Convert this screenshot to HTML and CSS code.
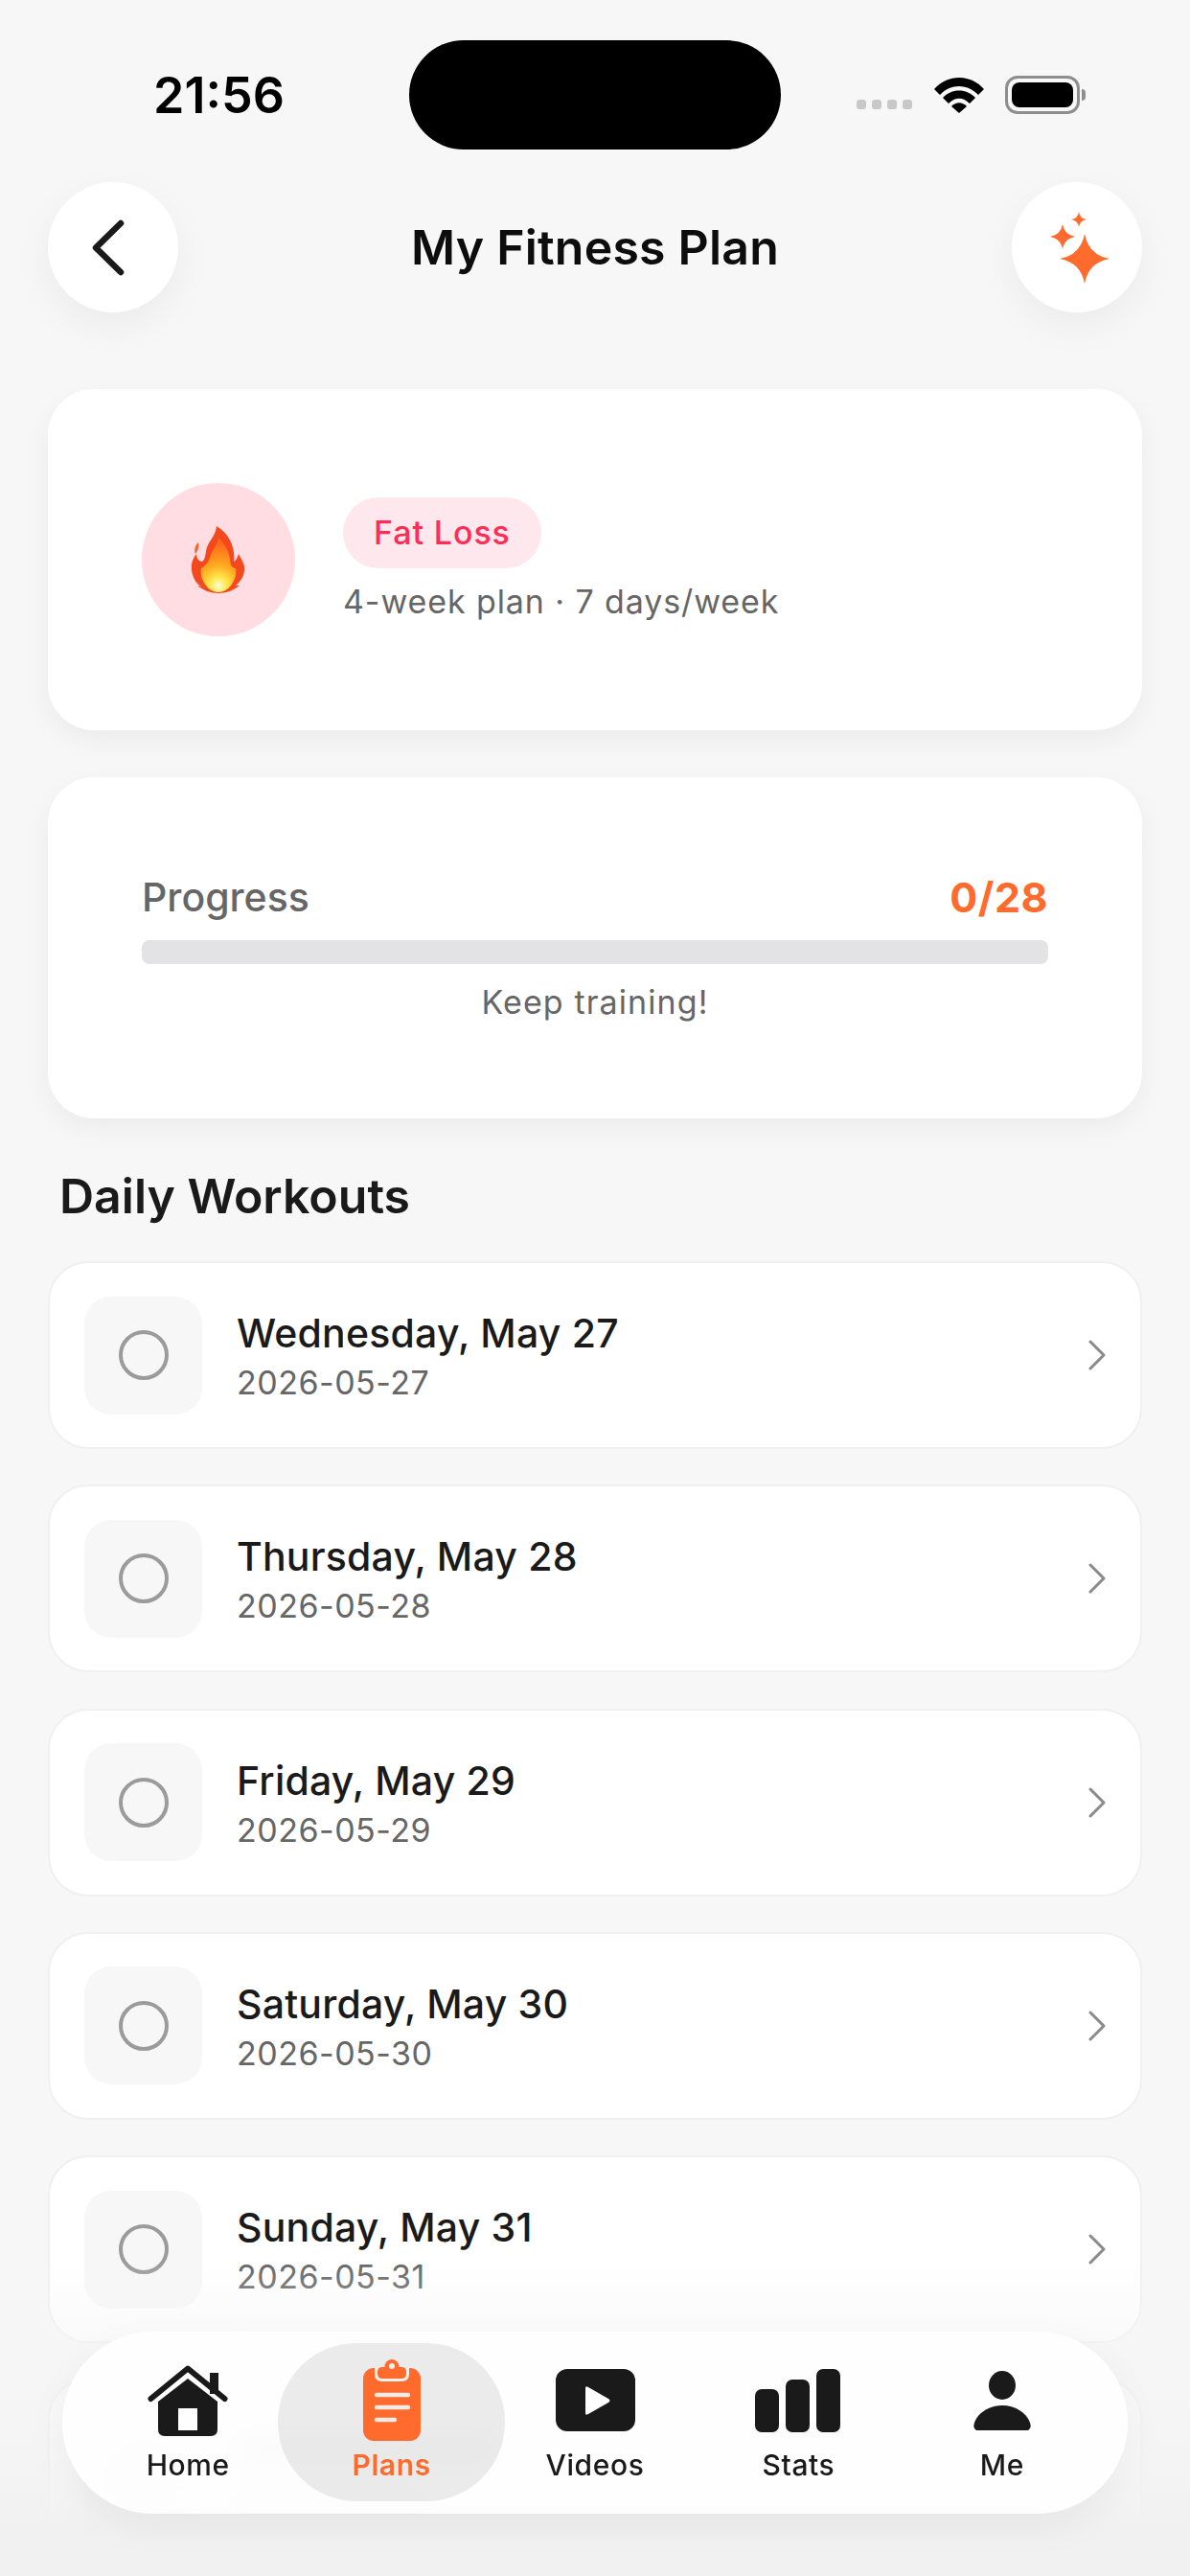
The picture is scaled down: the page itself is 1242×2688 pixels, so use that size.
FILE: index.html
```html
<!DOCTYPE html>
<html lang="en">
<head>
    <meta charset="UTF-8">
    <meta name="viewport" content="width=device-width, initial-scale=1.0">
    <title>My Fitness Plan</title>
    <link rel="stylesheet" href="styles.css">
</head>
<body>
    <div class="page">
        <div class="status">
            <span class="time">21:56</span>
            <div class="island"></div>
            <div class="status-icons">
                <div class="signal"><i></i><i></i><i></i><i></i></div>
                <svg class="wifi" width="54" height="38" viewBox="0 0 54 38">
                    <path d="M1 13 C15 -3 39 -3 53 13 L47 19 C36 7 18 7 7 19Z" fill="#000"/>
                    <path d="M10 22 C19 12 35 12 44 22 L38 28 C31 21 23 21 16 28Z" fill="#000"/>
                    <path d="M19 31 C24 26 30 26 35 31 L27 38Z" fill="#000"/>
                </svg>
                <div class="battery"><div class="battery-fill"></div></div>
                <div class="battery-cap"></div>
            </div>
        </div>

        <header class="topbar">
            <button class="round-btn">
                <svg width="48" height="64" viewBox="0 0 48 64">
                    <path d="M32 7 L6 32.500 L32 58" fill="none" stroke="#1a1a1a" stroke-width="6.500" stroke-linecap="round" stroke-linejoin="round"/>
                </svg>
            </button>
            <h1 class="title">My Fitness Plan</h1>
            <button class="round-btn">
                <svg width="80" height="80" viewBox="-3 0 80 80">
                    <path d="M45 26 Q49 48 71 52 Q49 56 45 78 Q41 56 19 52 Q41 48 45 26Z" fill="#ff6b2c"/>
                    <path d="M22 16 Q24 27 35 29 Q24 31 22 42 Q20 31 9 29 Q20 27 22 16Z" fill="#ff6b2c"/>
                    <path d="M39 3 Q40 10 47 11 Q40 12 39 19 Q38 12 31 11 Q38 10 39 3Z" fill="#ff6b2c"/>
                </svg>
            </button>
        </header>

        <section class="card hero">
            <div class="hero-icon">
                <svg width="56" height="70" viewBox="0 0 56 70">
                    <defs>
                        <radialGradient id="flame" cx="28" cy="62" r="62" gradientUnits="userSpaceOnUse">
                            <stop offset="0" stop-color="#fffbe0"/>
                            <stop offset="0.14" stop-color="#ffe84a"/>
                            <stop offset="0.36" stop-color="#ffa61f"/>
                            <stop offset="0.7" stop-color="#ff6a1a"/>
                            <stop offset="1" stop-color="#f4491f"/>
                        </radialGradient>
                    </defs>
                    <path d="M26 0 C25 10 19 14 16 22 C14 28 15 34 11 37 C7 37 5 33 5 29 C1 34 -1 40 0 46 C1 54 5 60 10 63 L6 62 C12 67 20 70 28 70 C36 70 44 67 50 62 L46 62 C52 57 56 50 55 42 C54 37 51 33 49 29 C48 33 46 36 44 37 C46 24 40 8 26 0Z" fill="#f4491f"/>
                    <path d="M28 12 C27 20 22 24 20 30 C18 38 14 42 10 44 C8 54 16 69 28 69 C40 69 48 54 46 44 C42 44 40 40 40 34 C39 26 34 18 28 12Z" fill="url(#flame)"/>
                    <path d="M7 17 C8 20 7 25 4 29 C2 25 4 20 7 17Z" fill="#f4622a"/>
                </svg>
            </div>
            <div class="hero-text">
                <span class="pill">Fat Loss</span>
                <span class="hero-sub">4-week plan · 7 days/week</span>
            </div>
        </section>

        <section class="card progress">
            <div class="progress-head">
                <span class="progress-label">Progress</span>
                <span class="progress-count">0/28</span>
            </div>
            <div class="progress-track"></div>
            <p class="progress-note">Keep training!</p>
        </section>

        <h2 class="section-title">Daily Workouts</h2>

        <div class="list">
            <div class="row">
                <div class="row-icon"><span class="ring"></span></div>
                <div class="row-text"><span class="row-title">Wednesday, May 27</span><span class="row-date">2026-05-27</span></div>
                <svg class="chev" width="20" height="32" viewBox="0 0 20 32"><path d="M3 2 L17 16 L3 30" fill="none" stroke="#8a8a8a" stroke-width="3" stroke-linecap="round" stroke-linejoin="round"/></svg>
            </div>
            <div class="row">
                <div class="row-icon"><span class="ring"></span></div>
                <div class="row-text"><span class="row-title">Thursday, May 28</span><span class="row-date">2026-05-28</span></div>
                <svg class="chev" width="20" height="32" viewBox="0 0 20 32"><path d="M3 2 L17 16 L3 30" fill="none" stroke="#8a8a8a" stroke-width="3" stroke-linecap="round" stroke-linejoin="round"/></svg>
            </div>
            <div class="row">
                <div class="row-icon"><span class="ring"></span></div>
                <div class="row-text"><span class="row-title">Friday, May 29</span><span class="row-date">2026-05-29</span></div>
                <svg class="chev" width="20" height="32" viewBox="0 0 20 32"><path d="M3 2 L17 16 L3 30" fill="none" stroke="#8a8a8a" stroke-width="3" stroke-linecap="round" stroke-linejoin="round"/></svg>
            </div>
            <div class="row">
                <div class="row-icon"><span class="ring"></span></div>
                <div class="row-text"><span class="row-title">Saturday, May 30</span><span class="row-date">2026-05-30</span></div>
                <svg class="chev" width="20" height="32" viewBox="0 0 20 32"><path d="M3 2 L17 16 L3 30" fill="none" stroke="#8a8a8a" stroke-width="3" stroke-linecap="round" stroke-linejoin="round"/></svg>
            </div>
            <div class="row">
                <div class="row-icon"><span class="ring"></span></div>
                <div class="row-text"><span class="row-title">Sunday, May 31</span><span class="row-date">2026-05-31</span></div>
                <svg class="chev" width="20" height="32" viewBox="0 0 20 32"><path d="M3 2 L17 16 L3 30" fill="none" stroke="#8a8a8a" stroke-width="3" stroke-linecap="round" stroke-linejoin="round"/></svg>
            </div>
            <!-- next day sits behind the tab bar, only a smudge of it shows -->
            <div class="row">
                <div class="row-icon"><span class="ring"></span></div>
                <div class="row-text"><span class="ghost-title"></span><span class="ghost-date"></span></div>
            </div>
        </div>

        <div class="fade"></div>

        <nav class="tabbar">
            <div class="tab">
                <div class="tab-icon">
                    <svg width="84" height="74" viewBox="0 0 84 74">
                        <path d="M65 8 H74 V30 H65Z" fill="#1a1a1a"/>
                        <path d="M3.500 35 L42 3.500 L80.500 35" fill="none" stroke="#1a1a1a" stroke-width="6" stroke-linecap="round" stroke-linejoin="round"/>
                        <path fill-rule="evenodd" d="M11 38 L42 14 L73 38 V67 Q73 74 66 74 H18 Q11 74 11 67Z M32 45 V68 H52 V45Z" fill="#1a1a1a"/>
                    </svg>
                </div>
                <span class="tab-label">Home</span>
            </div>
            <div class="tab active">
                <div class="tab-icon">
                    <svg width="60" height="85" viewBox="0 0 60 85">
                        <rect x="0" y="9" width="60" height="76" rx="11" fill="#ff6b2c"/>
                        <path d="M12 9 H48 V15 Q48 23 40 23 H20 Q12 23 12 15Z" fill="#f1efee"/>
                        <path d="M15 13 Q15 8 20 8 H40 Q45 8 45 13 V15 Q45 20 40 20 H20 Q15 20 15 15Z" fill="#ff6b2c"/>
                        <circle cx="30" cy="7.500" r="7.500" fill="#ff6b2c"/>
                        <circle cx="30" cy="7" r="3" fill="#f1efee"/>
                        <path d="M14 37 H47 M14 50 H47 M14 63 H33" stroke="#f4ece8" stroke-width="4.500" stroke-linecap="round"/>
                    </svg>
                </div>
                <span class="tab-label">Plans</span>
            </div>
            <div class="tab">
                <div class="tab-icon">
                    <svg width="83" height="65" viewBox="0 0 83 65">
                        <rect width="83" height="65" rx="12" fill="#1a1a1a"/>
                        <path d="M31 20 Q31 17 34 19 L55 31 Q58 33 55 35 L34 47 Q31 49 31 46Z" fill="#fff"/>
                    </svg>
                </div>
                <span class="tab-label">Videos</span>
            </div>
            <div class="tab">
                <div class="tab-icon">
                    <svg width="90" height="66" viewBox="0 0 90 66">
                        <rect x="0" y="21" width="25" height="45" rx="7" fill="#1a1a1a"/>
                        <rect x="32" y="11" width="25" height="55" rx="7" fill="#1a1a1a"/>
                        <rect x="64" y="0" width="25" height="66" rx="7" fill="#1a1a1a"/>
                    </svg>
                </div>
                <span class="tab-label">Stats</span>
            </div>
            <div class="tab">
                <div class="tab-icon">
                    <svg width="60" height="62" viewBox="0 0 60 62">
                        <ellipse cx="30" cy="15" rx="14" ry="15" fill="#1a1a1a"/>
                        <path d="M3 62 Q-1 60 1 54 C5 43 17 36 30 36 C43 36 55 43 59 54 Q61 60 57 62Z" fill="#1a1a1a"/>
                    </svg>
                </div>
                <span class="tab-label">Me</span>
            </div>
        </nav>
    </div>
</body>
</html>
```

FILE: styles.css
```css
*{
    box-sizing:border-box;
}
body{
    margin:0;
    font-family:Inter, "Liberation Sans", sans-serif;
    background:#f7f7f7;
}
.page{
    position:relative;
    width:1242px;
    height:2688px;
    padding:42px 50px 0;
    overflow:hidden;
    background:#f7f7f7;
}

/* status bar */
.status{
    display:grid;
    grid-template-columns:1fr 388px 1fr;
    align-items:center;
    height:114px;
}
.time{
    padding-left:110px;
    font-size:52px;
    font-weight:600;
    color:#000;
}
.island{
    height:114px;
    border-radius:57px;
    background:#000;
}
.status-icons{
    display:flex;
    align-items:center;
    justify-content:flex-end;
    padding-right:59px;
}
.signal{
    display:flex;
    gap:6px;
    margin:20px 22px 0 0;
}
.signal i{
    width:10px;
    height:10px;
    border-radius:3px;
    background:#c8c8c8;
}
.battery{
    width:78px;
    height:40px;
    margin-left:21px;
    padding:4px;
    border:3px solid #8e8e8e;
    border-radius:13px;
}
.battery-fill{
    height:100%;
    border-radius:8px;
    background:#000;
}
.battery-cap{
    width:4px;
    height:12px;
    margin-left:2px;
    border-radius:0 6px 6px 0;
    background:#8e8e8e;
}

/* top bar */
.topbar{
    display:flex;
    align-items:center;
    justify-content:space-between;
    margin-top:34px;
}
.round-btn{
    display:flex;
    align-items:center;
    justify-content:center;
    width:136px;
    height:136px;
    padding:0;
    border:none;
    border-radius:50%;
    background:#fff;
    box-shadow:0 14px 44px rgba(0,0,0,0.05);
}
.title{
    margin:0;
    font-size:50px;
    font-weight:600;
    letter-spacing:0.2px;
    color:#0d0d0d;
}

/* cards */
.card{
    height:356px;
    padding:98px;
    border-radius:48px;
    background:#fff;
    box-shadow:0 10px 30px rgba(0,0,0,0.05);
}
.hero{
    display:flex;
    align-items:center;
    gap:50px;
    margin-top:80px;
}
.hero-icon{
    display:flex;
    align-items:center;
    justify-content:center;
    flex:none;
    width:160px;
    height:160px;
    border-radius:50%;
    background:#ffdde3;
}
.hero-text{
    display:flex;
    flex-direction:column;
    align-items:flex-start;
    gap:14px;
}
.pill{
    padding:18px 32px;
    border-radius:37px;
    font-size:34px;
    line-height:38px;
    font-weight:500;
    letter-spacing:0.9px;
    color:#ff2d55;
    background:#ffe8ed;
}
.hero-sub{
    font-size:34px;
    line-height:42px;
    letter-spacing:0.9px;
    color:#666;
}
.progress{
    margin-top:49px;
    padding-top:100px;
}
.progress-head{
    display:flex;
    align-items:center;
    justify-content:space-between;
    height:50px;
}
.progress-label{
    font-size:41px;
    font-weight:500;
    color:#666;
}
.progress-count{
    font-size:43px;
    font-weight:700;
    letter-spacing:0.5px;
    color:#ff6b2c;
}
.progress-track{
    height:25px;
    margin-top:20px;
    border-radius:8px;
    background:#e3e3e5;
}
.progress-note{
    margin:19px 0 0;
    font-size:34px;
    line-height:42px;
    letter-spacing:1.1px;
    text-align:center;
    color:#666;
}

/* daily list */
.section-title{
    margin:52px 0 0 12px;
    font-size:50px;
    line-height:58px;
    font-weight:600;
    color:#1a1a1a;
}
.list{
    display:flex;
    flex-direction:column;
    gap:37.25px;
    margin-top:39px;
}
.row{
    display:flex;
    align-items:center;
    flex:none;
    height:196px;
    padding:0 36px;
    border:2px solid #f0f0f0;
    border-radius:42px;
    background:#fff;
}
.row-icon{
    display:flex;
    align-items:center;
    justify-content:center;
    flex:none;
    width:123px;
    height:123px;
    border-radius:28px;
    background:#f7f7f7;
}
.ring{
    width:52px;
    height:52px;
    border:4.5px solid #9b9b9b;
    border-radius:50%;
}
.row-text{
    display:flex;
    flex-direction:column;
    flex:1;
    margin-left:36px;
    padding-top:3px;
}
.row-title{
    font-size:41px;
    line-height:52px;
    font-weight:500;
    letter-spacing:0.2px;
    color:#1a1a1a;
}
.row-date{
    margin-top:3px;
    font-size:34px;
    line-height:46px;
    letter-spacing:0.5px;
    color:#666;
}
.ghost-title{
    width:270px;
    height:30px;
    border-radius:8px;
    background:#b4b4b4;
}
.ghost-date{
    width:200px;
    height:24px;
    margin-top:30px;
    border-radius:8px;
    background:#bbb;
}
.chev{
    flex:none;
    margin-right:-1px;
}

/* bottom */
.fade{
    position:absolute;
    left:0;
    right:0;
    bottom:0;
    height:328px;
    background:linear-gradient(to bottom, rgba(246,246,246,0), rgba(245,245,245,0.55) 26%, rgba(243,243,243,0.65) 62%, #f1f1f1 85%);
}
.tabbar{
    position:absolute;
    left:65px;
    top:2433px;
    display:flex;
    width:1112px;
    height:190px;
    padding:29px 25px 0;
    border-radius:95px;
    background:rgba(255,255,255,0.86);
    backdrop-filter:blur(14px);
    box-shadow:0 14px 40px rgba(0,0,0,0.05);
}
.tab{
    position:relative;
    display:flex;
    flex-direction:column;
    align-items:center;
    flex:1;
}
.tab.active::before{
    content:"";
    position:absolute;
    left:-12px;
    right:-12px;
    top:-17px;
    height:165px;
    border-radius:82px;
    background:rgba(0,0,0,0.075);
}
.tab-icon{
    position:relative;
    display:flex;
    align-items:center;
    justify-content:center;
    height:85px;
}
.tab-label{
    position:relative;
    margin-top:6px;
    font-size:30px;
    line-height:38px;
    font-weight:500;
    letter-spacing:0.6px;
    color:#1a1a1a;
}
.tab.active .tab-label{
    font-weight:600;
    color:#ff6b2c;
}
```
